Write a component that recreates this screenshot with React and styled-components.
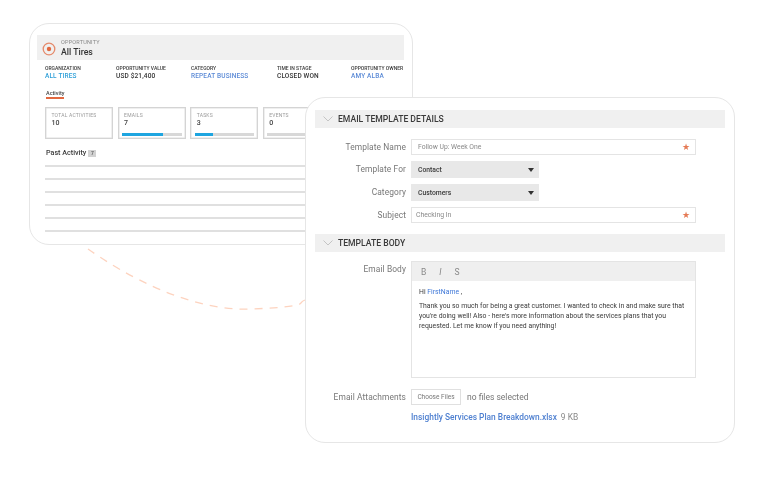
import styled, { createGlobalStyle } from "styled-components";

const GlobalStyle = createGlobalStyle`
  html, body { margin: 0; padding: 0; background: #fff; }
  body { font-family: Roboto, "Liberation Sans", sans-serif; color: #333; }
`;

const Canvas = styled.div`
  position: relative;
  width: 768px;
  height: 485px;
  overflow: hidden;
  background: #fff;
  filter: blur(0.3px);
`;

const Card = styled.div`
  position: absolute;
  box-sizing: border-box;
  background: #fff;
  border: 1px solid #e6e6e6;
  border-radius: 20px;
`;

const BackCard = styled(Card)`
  left: 29px;
  top: 23px;
  width: 384px;
  height: 222px;
  padding: 11px 8px 0 7px;
`;

const FrontCard = styled(Card)`
  left: 305px;
  top: 97px;
  width: 430px;
  height: 346px;
  padding: 12px 9px 0;
`;

const Dashes = styled.svg`
  position: absolute;
  left: 80px;
  top: 240px;
`;

const OppHeader = styled.div`
  box-sizing: border-box;
  display: flex;
  align-items: center;
  gap: 5px;
  height: 25px;
  padding: 2px 0 0 5px;
  background: #f0f0f0;
`;

const OppTitle = styled.div`
  display: flex;
  flex-direction: column;
  gap: 1px;
`;

const OppKicker = styled.span`
  font-size: 5.5px;
  line-height: 7px;
  color: #888;
  letter-spacing: 0.2px;
`;

const OppName = styled.span`
  font-size: 8.7px;
  line-height: 11px;
  font-weight: 500;
  color: #333;
`;

const MetaRow = styled.div`
  display: grid;
  grid-template-columns: 71px 75px 86px 74px 60px;
  margin: 5px 0 0 8px;
`;

const MetaCell = styled.div`
  display: flex;
  flex-direction: column;
  white-space: nowrap;
`;

const MetaLabel = styled.span`
  font-size: 5px;
  line-height: 7px;
  font-weight: 500;
  color: #3a3a3a;
`;

const MetaValue = styled.span`
  font-size: 6.5px;
  line-height: 9px;
  font-weight: 500;
  letter-spacing: 0.15px;
  color: ${({ tone }) => (tone === "cyan" ? "#2d9fd8" : tone === "blue" ? "#5b8ad6" : "#333")};
`;

const TabLabel = styled.div`
  width: 18px;
  margin: 9px 0 0 9px;
  padding-bottom: 1px;
  font-size: 5.5px;
  line-height: 6px;
  font-weight: 500;
  white-space: nowrap;
  color: #444;
  border-bottom: 2px solid #e2683f;
`;

const StatRow = styled.div`
  display: flex;
  gap: 4.6px;
  margin: 8px 0 0 8px;
  width: 400px;
`;

const StatBox = styled.div`
  box-sizing: border-box;
  flex: none;
  width: 68px;
  height: 32px;
  padding: 4px 3px 0 5.5px;
  border: 1px solid #d4d4d4;
  box-shadow: inset 0 0 0 0.5px #e0e0e0;
`;

const StatLabel = styled.div`
  font-size: 5px;
  line-height: 6px;
  color: #999;
  letter-spacing: 0.2px;
  white-space: nowrap;
`;

const StatValue = styled.div`
  margin-top: 1px;
  font-size: 7px;
  line-height: 9px;
  font-weight: 500;
  color: #444;
`;

const Track = styled.div`
  height: 3px;
  margin: 5px 0 0 -2px;
  background: #d8d8d8;
`;

const Fill = styled.div`
  height: 100%;
  background: #1ea5e0;
`;

const PastHeading = styled.div`
  display: flex;
  align-items: center;
  gap: 2px;
  margin: 9px 0 0 9px;
  font-size: 7.2px;
  line-height: 10px;
  font-weight: 500;
  color: #3a3a3a;
`;

const CountTag = styled.span`
  width: 8px;
  height: 7px;
  background: #d2d2d2;
  font-size: 5px;
  line-height: 7px;
  text-align: center;
  color: #555;
`;

const PastLines = styled.div`
  display: flex;
  flex-direction: column;
  gap: 11.5px;
  margin: 7px 0 0 8px;
`;

const PastLine = styled.div`
  height: 1.5px;
  background: #e0e0e0;
`;

const SectionBar = styled.div`
  display: flex;
  align-items: center;
  gap: 5px;
  height: 18px;
  padding-left: 8px;
  background: #f0f0f0;
  font-size: 8.6px;
  font-weight: 500;
  color: #3a3a3a;
`;

const Form = styled.div`
  display: grid;
  grid-template-columns: 91px 1fr;
  column-gap: 5px;
  row-gap: 6px;
  align-items: center;
  padding: ${({ tight }) => (tight ? "9px" : "11px")} 0 11px;
`;

const FieldLabel = styled.label`
  justify-self: end;
  margin-bottom: 1px;
  font-size: 8.4px;
  line-height: 10px;
  letter-spacing: 0.1px;
  color: #777;
  align-self: ${({ top }) => (top ? "start" : "center")};
  margin-top: ${({ top }) => (top ? "3px" : "0")};
`;

const TextField = styled.div`
  box-sizing: border-box;
  display: flex;
  align-items: center;
  justify-content: space-between;
  width: 285px;
  height: 16px;
  padding: 0 5px 0 ${({ inset }) => inset || 6}px;
  border: 1px solid #e4e4e4;
  font-size: 6.8px;
  color: #888;
`;

const Star = styled.span`
  font-size: 9px;
  line-height: 9px;
  color: #e57a55;
`;

const SelectBox = styled.div`
  box-sizing: border-box;
  display: flex;
  align-items: center;
  justify-content: space-between;
  width: 128px;
  height: 17px;
  padding: 0 5px 0 7px;
  background: #e8e8e8;
  font-size: 6.8px;
  font-weight: 500;
  color: #3a3a3a;
`;

const Caret = styled.span`
  width: 0;
  height: 0;
  border-left: 3px solid transparent;
  border-right: 3px solid transparent;
  border-top: 4px solid #333;
`;

const Editor = styled.div`
  box-sizing: border-box;
  width: 285px;
  height: 117px;
  border: 1px solid #e4e4e4;
`;

const EditorTools = styled.div`
  display: flex;
  gap: 13px;
  height: 19px;
  align-items: center;
  padding-left: 9px;
  background: #efefef;
  font-size: 8.5px;
  color: #888;
`;

const EditorBody = styled.div`
  padding: 6px 7px;
  font-size: 6.85px;
  line-height: 10px;
  color: #3a3a3a;
`;

const Greeting = styled.p`
  margin: 0 0 4px;
`;

const Paragraph = styled.p`
  margin: 0;
`;

const MergeTag = styled.span`
  color: #3f78d8;
`;

const FileRow = styled.div`
  display: flex;
  align-items: center;
  gap: 6px;
  margin-top: 5px;
  font-size: 8.5px;
  color: #777;
`;

const FileButton = styled.div`
  box-sizing: border-box;
  width: 50px;
  height: 16px;
  border: 1px solid #e0e0e0;
  font-size: 6.5px;
  line-height: 14px;
  text-align: center;
  color: #777;
`;

const AttachedFile = styled.div`
  grid-column: 2;
  margin-top: 1px;
  font-size: 8.4px;
  color: #888;
`;

const FileLink = styled.span`
  margin-right: 4px;
  font-weight: 500;
  color: #4d7fd0;
`;

const AttachmentLabel = styled(FieldLabel)`
  margin-top: 5px;
`;

const stats = [
  { label: "TOTAL ACTIVITIES", value: 10 },
  { label: "EMAILS", value: 7, bar: 69 },
  { label: "TASKS", value: 3, bar: 30 },
  { label: "EVENTS", value: 0, bar: 0 },
];

const meta = [
  { label: "ORGANIZATION", value: "ALL TIRES", tone: "cyan" },
  { label: "OPPORTUNITY VALUE", value: "USD $21,400" },
  { label: "CATEGORY", value: "REPEAT BUSINESS", tone: "blue" },
  { label: "TIME IN STAGE", value: "CLOSED WON" },
  { label: "OPPORTUNITY OWNER", value: "AMY ALBA", tone: "blue" },
];

function Chevron() {
  return (
    <svg width="10" height="6" viewBox="0 0 10 6">
      <path d="M0.5 0.5 L5 5 L9.5 0.5" fill="none" stroke="#c4c4c4" strokeWidth="1" />
    </svg>
  );
}

export default function App() {
  return (
    <Canvas>
      <GlobalStyle />
      <BackCard>
        <OppHeader>
          <svg width="14" height="14" viewBox="0 0 14 14">
            <circle cx="7" cy="7" r="5.8" fill="none" stroke="#e58a6b" strokeWidth="1.3" />
            <circle cx="7" cy="7" r="2.2" fill="#e2683f" />
          </svg>
          <OppTitle>
            <OppKicker>OPPORTUNITY</OppKicker>
            <OppName>All Tires</OppName>
          </OppTitle>
        </OppHeader>
        <MetaRow>
          {meta.map((m) => (
            <MetaCell key={m.label}>
              <MetaLabel>{m.label}</MetaLabel>
              <MetaValue tone={m.tone}>{m.value}</MetaValue>
            </MetaCell>
          ))}
        </MetaRow>
        <TabLabel>Activity</TabLabel>
        <StatRow>
          {stats.map((s) => (
            <StatBox key={s.label}>
              <StatLabel>{s.label}</StatLabel>
              <StatValue>{s.value}</StatValue>
              {s.bar !== undefined && (
                <Track>
                  <Fill style={{ width: `${s.bar}%` }} />
                </Track>
              )}
            </StatBox>
          ))}
        </StatRow>
        <PastHeading>
          Past Activity <CountTag>7</CountTag>
        </PastHeading>
        <PastLines>
          {[0, 1, 2, 3, 4, 5].map((n) => (
            <PastLine key={n} />
          ))}
        </PastLines>
      </BackCard>

      <Dashes width="230" height="80" viewBox="0 0 230 80">
        <path
          d="M8 9 C 45 35, 110 72, 173 69 S 215 63, 225 60"
          fill="none"
          stroke="#fdd3bf"
          strokeWidth="1.3"
          strokeDasharray="8 7"
        />
      </Dashes>

      <FrontCard>
        <SectionBar>
          <Chevron />
          EMAIL TEMPLATE DETAILS
        </SectionBar>
        <Form>
          <FieldLabel>Template Name</FieldLabel>
          <TextField>
            Follow Up: Week One
            <Star>★</Star>
          </TextField>
          <FieldLabel>Template For</FieldLabel>
          <SelectBox>
            Contact
            <Caret />
          </SelectBox>
          <FieldLabel>Category</FieldLabel>
          <SelectBox>
            Customers
            <Caret />
          </SelectBox>
          <FieldLabel>Subject</FieldLabel>
          <TextField inset={4}>
            Checking In
            <Star>★</Star>
          </TextField>
        </Form>
        <SectionBar>
          <Chevron />
          TEMPLATE BODY
        </SectionBar>
        <Form tight>
          <FieldLabel top>Email Body</FieldLabel>
          <Editor>
            <EditorTools>
              <span>B</span>
              <em>I</em>
              <span>S</span>
            </EditorTools>
            <EditorBody>
              <Greeting>
                Hi <MergeTag>FirstName</MergeTag> ,
              </Greeting>
              <Paragraph>
                Thank you so much for being a great customer. I wanted to check in and make sure that
                you're doing well! Also - here's more information about the services plans that you
                requested. Let me know if you need anything!
              </Paragraph>
            </EditorBody>
          </Editor>
          <AttachmentLabel>Email Attachments</AttachmentLabel>
          <FileRow>
            <FileButton>Choose Files</FileButton>
            no files selected
          </FileRow>
          <AttachedFile>
            <FileLink>Insightly Services Plan Breakdown.xlsx</FileLink>
            9 KB
          </AttachedFile>
        </Form>
      </FrontCard>
    </Canvas>
  );
}
